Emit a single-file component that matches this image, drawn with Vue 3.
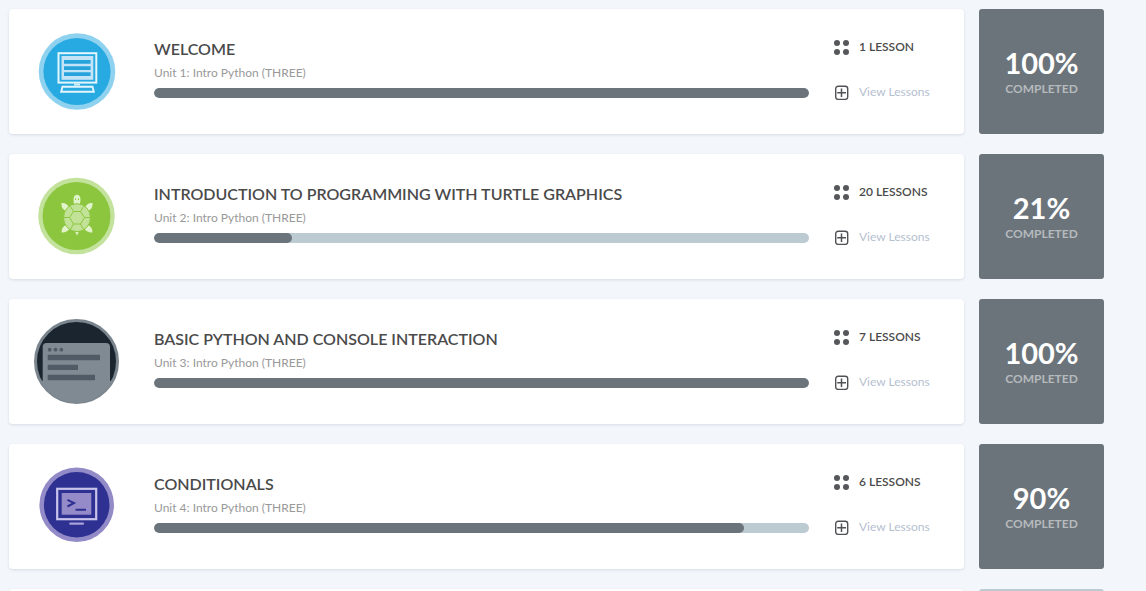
<script setup>
const units = [
  { title: 'WELCOME', subtitle: 'Unit 1: Intro Python (THREE)', lessons: '1 LESSON', percent: 100, icon: 'computer' },
  { title: 'INTRODUCTION TO PROGRAMMING WITH TURTLE GRAPHICS', subtitle: 'Unit 2: Intro Python (THREE)', lessons: '20 LESSONS', percent: 21, icon: 'turtle' },
  { title: 'BASIC PYTHON AND CONSOLE INTERACTION', subtitle: 'Unit 3: Intro Python (THREE)', lessons: '7 LESSONS', percent: 100, icon: 'console' },
  { title: 'CONDITIONALS', subtitle: 'Unit 4: Intro Python (THREE)', lessons: '6 LESSONS', percent: 90, icon: 'terminal' }
]
</script>

<template>
  <main class="page">
    <section v-for="unit in units" :key="unit.title" class="row">
      <article class="card">
        <svg v-if="unit.icon === 'computer'" class="badge" viewBox="0 0 85 85" aria-hidden="true">
          <circle cx="43" cy="42.5" r="38.3" fill="#8fd2ef" />
          <circle cx="43" cy="42.5" r="33.6" fill="#27aae1" />
          <rect x="24.5" y="24.2" width="37.8" height="29.4" fill="none" stroke="#e3f5fd" stroke-width="2" />
          <rect x="27.5" y="27" width="31.8" height="23.8" fill="#c3e3f7" />
          <path d="M30 31h26.6v3.7H30zM30 37.3h26.6V41H30zM30 43.3h26.6V47H30z" fill="#27a4dc" />
          <path d="M40 55.5h6" stroke="#d5effb" stroke-width="2" />
          <path d="M28.5 57.7h30l1.3 5H27.2z" fill="none" stroke="#e3f5fd" stroke-width="1.9" />
        </svg>
        <svg v-else-if="unit.icon === 'turtle'" class="badge" viewBox="0 0 85 85" aria-hidden="true">
          <circle cx="42.5" cy="42" r="38.3" fill="#c3e29c" />
          <circle cx="42.5" cy="42" r="34" fill="#8cc63f" />
          <g fill="#e1f3c8">
            <path d="M40 30.5c0-2-.5-3-.5-5 0-3 1.500-4.800 3.500-4.800s3.500 1.800 3.500 4.800c0 2-.5 3-.5 5z" />
            <path d="M35 34.500c-.5-3.500-3-5.500-7.500-5.500-.5 4 1.500 7 5 8zM51 34.500c.5-3.500 3-5.500 7.500-5.500.5 4-1.500 7-5 8z" />
            <path d="M32.500 51c-3.500 1-5 3.500-5 7.500 4.500 0 7.500-2 8.500-5zM53.500 51c3.500 1 5 3.500 5 7.500-4.500 0-7.500-2-8.500-5z" />
            <path d="M41 57.500h4l-2 4z" />
          </g>
          <ellipse cx="43" cy="43.700" rx="13.500" ry="14" fill="#c2e298" stroke="#8cc63f" stroke-width="1" />
          <path d="M39.500 37.500h7l4 6-4 6.500h-7l-4-6.500zM39.500 37.500l-3-5M46.500 37.500l3-5M50.500 43.500h6M46.500 50l3 5.500M39.500 50l-3 5.500M35.500 43.500h-6" fill="none" stroke="#8cc63f" stroke-width="1" />
          <path d="M41.500 24.500v1.500M44.500 24.500v1.500" stroke="#8cc63f" />
        </svg>
        <svg v-else-if="unit.icon === 'console'" class="badge" viewBox="0 0 85 85" aria-hidden="true">
          <defs>
            <clipPath id="console-clip"><circle cx="42.500" cy="42.500" r="41" /></clipPath>
          </defs>
          <circle cx="42.500" cy="42.500" r="41" fill="#1a2530" stroke="#7b858e" stroke-width="3" />
          <g clip-path="url(#console-clip)">
            <rect x="8.700" y="24" width="67.300" height="64" rx="4" fill="#7f8a93" />
            <path d="M0 62h85v23H0z" fill="#7f8a93" />
          </g>
          <g fill="#505b66">
            <circle cx="15.700" cy="30.700" r="1.900" />
            <circle cx="21.500" cy="30.700" r="1.900" />
            <circle cx="27.300" cy="30.700" r="1.900" />
            <path d="M13.700 35.700H66v5.600H13.700zM13.700 45.700H44V51H13.700zM13.700 55.700H61v5.600H13.700z" />
          </g>
        </svg>
        <svg v-else class="badge" viewBox="0 0 85 85" aria-hidden="true">
          <circle cx="42.700" cy="40.700" r="37.300" fill="#928bc7" />
          <circle cx="42.700" cy="40.700" r="32.800" fill="#2e3192" />
          <rect x="23.200" y="24.800" width="39" height="30.400" fill="none" stroke="#c9c4ec" stroke-width="2.200" />
          <rect x="27.700" y="29" width="29.600" height="21.700" fill="#968bc9" />
          <path d="M33.500 35.800l6.500 3.200-6.500 3.500M41.500 45.700H52" fill="none" stroke="#2e3192" stroke-width="2" />
          <path d="M36.300 59.700h12.700" stroke="#a8a1dc" stroke-width="2.200" stroke-linecap="round" />
        </svg>

        <div class="info">
          <h2 class="title">{{ unit.title }}</h2>
          <p class="subtitle">{{ unit.subtitle }}</p>
          <div class="track" role="progressbar" :aria-label="unit.title" :aria-valuenow="unit.percent" aria-valuemin="0" aria-valuemax="100">
            <div class="fill" :style="{ width: unit.percent + '%' }"></div>
          </div>
        </div>

        <div class="meta">
          <div class="meta-line">
            <svg class="glyph" viewBox="0 0 15 15" aria-hidden="true" fill="#55575a">
              <circle cx="3" cy="3" r="3" />
              <circle cx="12" cy="3" r="3" />
              <circle cx="3" cy="12" r="3" />
              <circle cx="12" cy="12" r="3" />
            </svg>
            <span>{{ unit.lessons }}</span>
          </div>
          <button type="button" class="meta-line view">
            <svg class="glyph" viewBox="0 0 15 15" aria-hidden="true" fill="none" stroke="#505255">
              <rect x="1.700" y="1.200" width="12" height="13.200" rx="2.500" stroke-width="1.400" />
              <path d="M7.500 3.500v8.500M3.200 7.700h8.800" stroke-width="1.500" />
            </svg>
            <span>View Lessons</span>
          </button>
        </div>
      </article>
      <aside class="tile">
        <strong class="percent">{{ unit.percent }}%</strong>
        <span class="caption">COMPLETED</span>
      </aside>
    </section>
    <section class="row">
      <article class="card"></article>
      <aside class="tile pending"></aside>
    </section>
  </main>
</template>

<style>
body {
  margin: 0;
  background: #f3f7fc;
}
</style>

<style scoped>
.page {
  box-sizing: border-box;
  height: 100vh;
  overflow: hidden;
  padding: 9px 42px 0 9px;
  display: flex;
  flex-direction: column;
  gap: 20px;
  background: #f3f7fc;
  font-family: Lato, "Open Sans", sans-serif;
  color: #4a4a4a;
}
.row {
  display: flex;
  gap: 15px;
  flex: none;
  min-height: 125px;
}
.card {
  box-sizing: border-box;
  flex: 1;
  min-width: 0;
  display: flex;
  align-items: flex-start;
  padding: 20px 25px;
  background: #fff;
  border-radius: 4px;
  box-shadow: 0 1px 3px rgba(60, 80, 100, 0.16);
}
.badge {
  flex: none;
  width: 85px;
  height: 85px;
}
.info {
  flex: 1;
  min-width: 0;
  margin: 0 25px 0 35px;
  padding-top: 10px;
}
.title {
  margin: 0;
  font-size: 16px;
  line-height: 20px;
  font-weight: 600;
}
.subtitle {
  margin: 6px 0 7px;
  font-size: 12px;
  line-height: 16px;
  color: #999;
}
.track {
  height: 10px;
  border-radius: 5px;
  background: #bccad2;
  overflow: hidden;
}
.fill {
  height: 100%;
  border-radius: 5px;
  background: #6c747b;
}
.meta {
  flex: none;
  width: 105px;
  padding-top: 8px;
  display: flex;
  flex-direction: column;
  gap: 25px;
}
.meta-line {
  display: flex;
  align-items: center;
  gap: 10px;
  height: 20px;
  font-size: 12px;
  line-height: 20px;
  font-weight: 600;
  white-space: nowrap;
}
.view {
  padding: 0;
  border: 0;
  background: none;
  font-family: inherit;
  font-weight: 400;
  color: #b5c0cf;
  cursor: pointer;
}
.glyph {
  flex: none;
  width: 15px;
  height: 15px;
}
.tile {
  flex: none;
  width: 125px;
  display: flex;
  flex-direction: column;
  align-items: center;
  justify-content: center;
  gap: 2px;
  background: #6c747b;
  border-radius: 3px;
}
.pending {
  background: #bccad2;
}
.percent {
  font-size: 29px;
  line-height: 32px;
  font-weight: 700;
  color: #fff;
}
.caption {
  font-size: 12px;
  line-height: 16px;
  font-weight: 700;
  color: #b5babd;
}
</style>
